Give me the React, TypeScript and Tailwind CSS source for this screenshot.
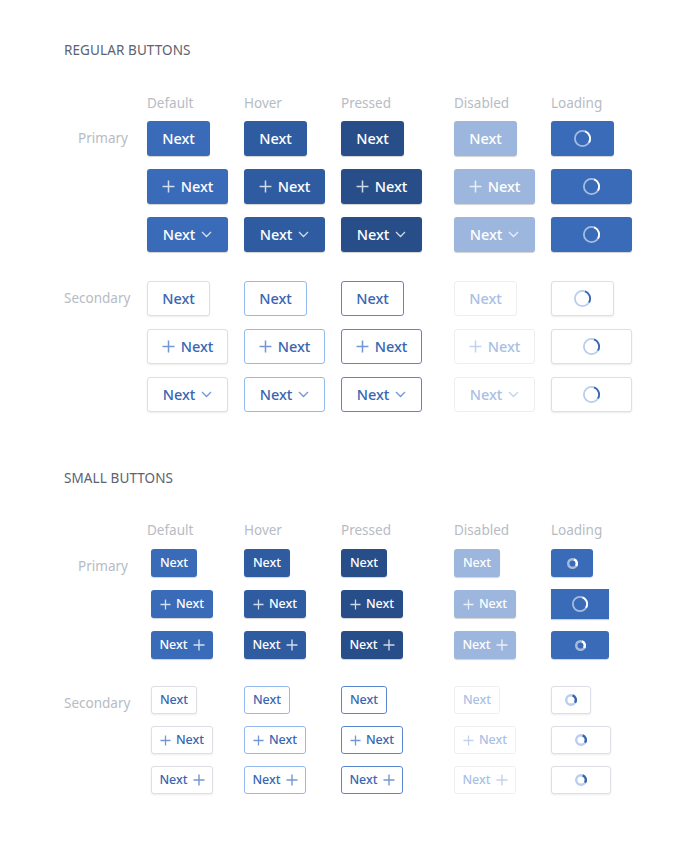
import React from 'react';

type Variant = 'primary' | 'secondary';
type State = 'default' | 'hover' | 'pressed' | 'disabled' | 'loading';
type Kind = 'text' | 'plus' | 'chevron' | 'plusAfter';
type Size = 'regular' | 'small';

const STATES: State[] = ['default', 'hover', 'pressed', 'disabled', 'loading'];
const HEADERS = ['Default', 'Hover', 'Pressed', 'Disabled', 'Loading'];
// column cell widths, measured from the left edge of each column
const COLS = ['w-[97px]', 'w-[97px]', 'w-[113px]', 'w-[97px]', 'w-[90px]'];

const primaryBg: Record<State, string> = {
  default: 'bg-[#3a6bb9]',
  hover: 'bg-[#2f5ca0]',
  pressed: 'bg-[#274e89]',
  disabled: 'bg-[#9db6dd]',
  loading: 'bg-[#3a6bb9]',
};

const secondaryBorder: Record<State, string> = {
  default: 'border-[#dcdfe6] shadow-[0_1px_2px_rgba(0,0,0,0.08)]',
  hover: 'border-[#93b9ef]',
  pressed: 'border-[#5a87d0]',
  disabled: 'border-[#eceef2]',
  loading: 'border-[#dcdfe6] shadow-[0_1px_2px_rgba(0,0,0,0.08)]',
};

function Plus({ size, color }: { size: number; color: string }) {
  return (
    <svg width={size} height={size} viewBox="0 0 12 12" fill="none">
      <path d="M6 0.5v11M0.5 6h11" stroke={color} strokeWidth="1.4" />
    </svg>
  );
}

function Chevron({ color }: { color: string }) {
  return (
    <svg width="11" height="7" viewBox="0 0 11 7" fill="none">
      <path d="M1 1l4.5 4.5L10 1" stroke={color} strokeWidth="1.3" />
    </svg>
  );
}

function Spinner({ size, variant, stroke }: { size: number; variant: Variant; stroke: number }) {
  const r = (size - stroke) / 2;
  const c = size / 2;
  const circ = 2 * Math.PI * r;
  const ring = variant === 'primary' ? 'rgba(255,255,255,0.55)' : '#b9cdef';
  const arc = variant === 'primary' ? '#ffffff' : '#3564b0';
  return (
    <svg width={size} height={size} viewBox={`0 0 ${size} ${size}`}>
      <circle cx={c} cy={c} r={r} fill="none" stroke={ring} strokeWidth={stroke} />
      <circle
        cx={c}
        cy={c}
        r={r}
        fill="none"
        stroke={arc}
        strokeWidth={stroke}
        strokeDasharray={`${circ * 0.28} ${circ}`}
        transform={`rotate(-70 ${c} ${c})`}
      />
    </svg>
  );
}

interface BtnProps {
  variant: Variant;
  state: State;
  kind: Kind;
  size: Size;
  width: string;
  square?: boolean;
  spin?: number;
}

function Btn({ variant, state, kind, size, width, square, spin }: BtnProps) {
  const small = size === 'small';
  const height = small ? (square ? 'h-[30px]' : 'h-[28px]') : 'h-[35px]';
  const base = `${width} ${height} ${square ? '' : 'rounded-[3px]'} flex items-center justify-center`;
  let cls: string;
  let textColor: string;
  let iconColor: string;
  if (variant === 'primary') {
    cls = `${primaryBg[state]} shadow-[0_1px_1px_rgba(0,0,0,0.18)]`;
    textColor = 'text-white';
    iconColor = 'rgba(255,255,255,0.78)';
  } else {
    cls = `bg-white border ${secondaryBorder[state]}`;
    textColor = state === 'disabled' ? 'text-[#a9bfe5]' : 'text-[#3866b2]';
    iconColor = state === 'disabled' ? '#c2d2ee' : '#7198d4';
  }
  const textSize = small ? 'text-[12.5px]' : 'text-[14.5px]';

  if (state === 'loading') {
    return (
      <div className={`${base} ${cls}`}>
        <Spinner size={spin ?? 17} variant={variant} stroke={small && (spin ?? 17) < 14 ? 2.4 : 1.8} />
      </div>
    );
  }

  return (
    <div className={`${base} ${cls} ${textColor} ${textSize} font-medium ${small ? 'gap-[5px]' : 'gap-[6px]'}`}>
      {kind === 'plus' && <Plus size={small ? 11 : 13} color={iconColor} />}
      <span className="leading-none">Next</span>
      {kind === 'chevron' && <Chevron color={iconColor} />}
      {kind === 'plusAfter' && <Plus size={small ? 12 : 13} color={iconColor} />}
    </div>
  );
}

function HeaderRow({ top }: { top: string }) {
  return (
    <div className={`flex ${top} text-[13.5px] text-[#b7bbc4]`}>
      <div className="w-[83px]" />
      {HEADERS.map((h, i) => (
        <div key={h} className={COLS[i]}>
          {h}
        </div>
      ))}
    </div>
  );
}

function RegularGroup({ variant, label }: { variant: Variant; label: string }) {
  const rows: Kind[] = ['text', 'plus', 'chevron'];
  return (
    <div className="flex flex-col gap-[13px]">
      {rows.map((kind, ri) => (
        <div key={kind} className="flex items-center">
          <div className="w-[64px] text-right text-[13.5px] text-[#b7bbc4]">{ri === 0 ? label : ''}</div>
          <div className="w-[19px]" />
          {STATES.map((s, i) => (
            <div key={s} className={COLS[i]}>
              <Btn
                variant={variant}
                state={s}
                kind={kind}
                size="regular"
                width={kind === 'text' ? 'w-[63px]' : 'w-[81px]'}
              />
            </div>
          ))}
        </div>
      ))}
    </div>
  );
}

function SmallGroup({ variant, label }: { variant: Variant; label: string }) {
  const rows: Kind[] = ['text', 'plus', 'plusAfter'];
  const loadW =
    variant === 'primary' ? ['w-[42px]', 'w-[58px]', 'w-[58px]'] : ['w-[40px]', 'w-[60px]', 'w-[60px]'];
  const spins = variant === 'primary' ? [11, 16, 11] : [12, 12, 12];
  return (
    <div className="flex flex-col gap-[12px]">
      {rows.map((kind, ri) => (
        <div key={kind} className="flex items-center">
          <div className="w-[64px] text-right text-[13.5px] text-[#b7bbc4] pt-[6px]">{ri === 0 ? label : ''}</div>
          <div className="w-[19px]" />
          {STATES.map((s, i) => (
            <div key={s} className={`${COLS[i]} ${i === 0 ? 'pl-[4px]' : ''}`}>
              <Btn
                variant={variant}
                state={s}
                kind={kind}
                size="small"
                width={s === 'loading' ? loadW[ri] : kind === 'text' ? 'w-[46px]' : 'w-[62px]'}
                square={s === 'loading' && variant === 'primary' && ri === 1}
                spin={spins[ri]}
              />
            </div>
          ))}
        </div>
      ))}
    </div>
  );
}

export default function App() {
  return (
    <div
      className="w-[680px] h-[848px] bg-white pl-[64px]"
      style={{ fontFamily: '"Noto Sans", "Open Sans", sans-serif' }}
    >
      {/* Regular */}
      <div className="pt-[41px] text-[13.5px] tracking-[0.1px] text-[#5b6270] leading-[18px]">REGULAR BUTTONS</div>
      <HeaderRow top="mt-[35px] leading-[18px]" />
      <div className="mt-[9px]">
        <RegularGroup variant="primary" label="Primary" />
      </div>
      <div className="mt-[29px]">
        <RegularGroup variant="secondary" label="Secondary" />
      </div>

      {/* Small */}
      <div className="mt-[57px] text-[13.5px] tracking-[0.1px] text-[#5b6270] leading-[18px]">SMALL BUTTONS</div>
      <HeaderRow top="mt-[34px] leading-[18px]" />
      <div className="mt-[10px]">
        <SmallGroup variant="primary" label="Primary" />
      </div>
      <div className="mt-[27px]">
        <SmallGroup variant="secondary" label="Secondary" />
      </div>
    </div>
  );
}
